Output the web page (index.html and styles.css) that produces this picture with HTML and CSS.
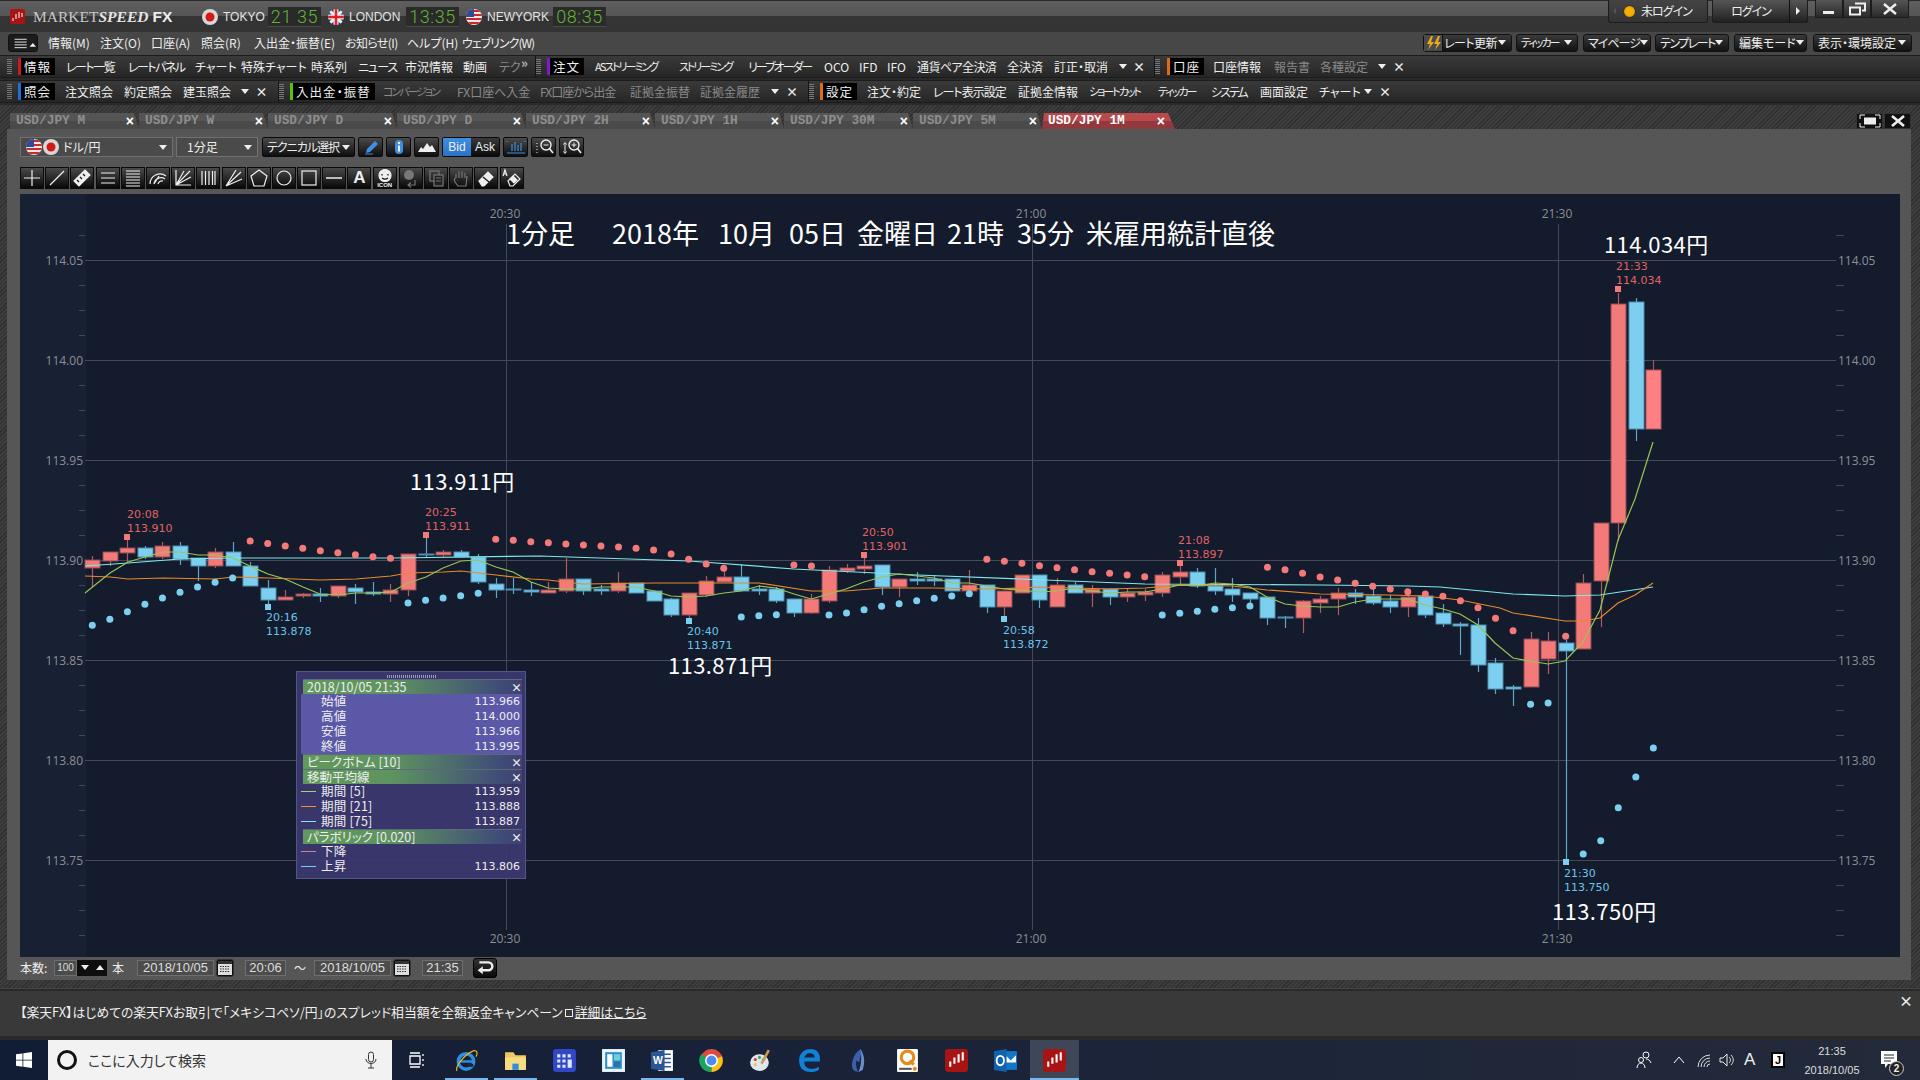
FILE: index.html
```html
<!DOCTYPE html>
<html lang="ja">
<head>
<meta charset="utf-8">
<title>MARKETSPEED FX</title>
<link rel="stylesheet" href="styles.css">
</head>
<body>
<svg class="defs" width="0" height="0" aria-hidden="true">
  <defs>
    <clipPath id="cf"><circle cx="8" cy="8" r="8"/></clipPath>
    <symbol id="jp" viewBox="0 0 16 16"><circle cx="8" cy="8" r="8" fill="#d8d8d8"/><circle cx="8" cy="8" r="4.5" fill="#d41818"/></symbol>
    <symbol id="uk" viewBox="0 0 16 16"><g clip-path="url(#cf)"><rect width="16" height="16" fill="#2a3f8f"/><path d="M0 0L16 16M16 0L0 16" stroke="#eee" stroke-width="3"/><path d="M8 0v16M0 8h16" stroke="#eee" stroke-width="5"/><path d="M8 0v16M0 8h16" stroke="#d22" stroke-width="2.5"/></g></symbol>
    <symbol id="us" viewBox="0 0 16 16"><g clip-path="url(#cf)"><rect width="16" height="16" fill="#e8e8e8"/><path d="M0 2h16M0 6h16M0 10h16M0 14h16" stroke="#c92a2a" stroke-width="2"/><rect width="8" height="8" fill="#2e4a9a"/></g></symbol>
  </defs>
</svg>
<div class="app">
  <header class="titlebar">
    <svg class="logo" viewBox="0 0 15 15"><rect width="15" height="15" rx="2" fill="#a81414"/><path d="M3 9v3M6 5v5M9 3v6M12 4v4" stroke="#f2d8d8" stroke-width="1.2"/></svg>
    <div class="brand"><span>MARKET</span><b>SPEED</b><strong>FX</strong></div>
    <svg class="flag fl1"><use href="#jp"/></svg><span class="city c1">TOKYO</span><span class="clock">21 35</span>
    <svg class="flag fl2"><use href="#uk"/></svg><span class="city c2">LONDON</span><span class="clock">13:35</span>
    <svg class="flag fl2"><use href="#us"/></svg><span class="city c3">NEWYORK</span><span class="clock">08:35</span>
    <div class="top-right">
      <div class="status-box"><i class="arrow-l"></i><i class="led"></i><span class="l1">未ログイン</span></div>
      <div class="login"><span class="l1">ログイン</span><i class="arrow-r"></i></div>
      <div class="winbtns">
        <span class="wb"><svg viewBox="0 0 20 14"><rect x="4" y="9" width="11" height="3" fill="#eee"/></svg></span>
        <span class="wb"><svg viewBox="0 0 20 14"><path d="M8 1.5h10v7h-3M3 5.5h10v7H3z" fill="none" stroke="#eee" stroke-width="2"/></svg></span>
        <span class="wb wb-x"><svg viewBox="0 0 20 14"><path d="M4 2l12 10M16 2L4 12" stroke="#eee" stroke-width="2.4"/></svg></span>
      </div>
    </div>
  </header>

  <nav class="menubar">
    <div class="menu-list">
      <span class="hamb"><svg viewBox="0 0 30 16"><path d="M6 4h13M6 7h13M6 10h13M6 13h13" stroke="#eee"/><path d="M22 12l3.500-4 3.500 4z" fill="#eee"/></svg></span>
      <span>情報(M)</span><span>注文(O)</span><span>口座(A)</span><span>照会(R)</span><span>入出金・振替(E)</span><span class="l05">お知らせ(I)</span><span>ヘルプ(H)</span><span class="l1">ウェブリンク(W)</span>
    </div>
    <div class="quick">
      <span class="qb q1"><span class="bolt"><svg viewBox="0 0 18 16"><path d="M7 1L3 9h3l-2 6 6-8H7l2-6zM14 1l-4 8h3l-2 6 6-8h-3l2-6z" fill="#e8a81c"/></svg></span><span class="qt l05">レート更新</span><i class="dn"></i></span>
      <span class="qb q2"><span class="qt l3">ティッカー</span><i class="dn"></i></span>
      <span class="qb q3"><span class="qt l1">マイページ</span><i class="dn"></i></span>
      <span class="qb q4"><span class="qt l15">テンプレート</span><i class="dn"></i></span>
      <span class="qb q5"><span class="qt">編集モード</span><i class="dn"></i></span>
      <span class="qb q6"><span class="qt">表示・環境設定</span><i class="dn"></i></span>
    </div>
  </nav>

  <div class="toolrow">
    <div class="tg ta1"><i class="grip"></i><span class="lbl l-red">情報</span><span class="l15">レート一覧</span><span class="l15">レートパネル</span><span>チャート</span><span>特殊チャート</span><span>時系列</span><span class="l1">ニュース</span><span>市況情報</span><span>動画</span><span class="mut">テク</span><span class="more">»</span></div>
    <div class="tg ta2"><i class="grip"></i><span class="lbl l-pur">注文</span><span class="l3">ASストリーミング</span><span class="l3">ストリーミング</span><span class="l2">リーブオーダー</span><span>OCO</span><span>IFD</span><span>IFO</span><span class="l05">通貨ペア全決済</span><span>全決済</span><span>訂正・取消</span><i class="dn"></i><span class="x">×</span></div>
    <div class="tg ta3"><i class="grip"></i><span class="lbl l-org">口座</span><span>口座情報</span><span class="mut">報告書</span><span class="mut">各種設定</span><i class="dn"></i><span class="x">×</span></div>
  </div>
  <div class="toolrow">
    <div class="tg tb1"><i class="grip"></i><span class="lbl l-blu">照会</span><span>注文照会</span><span>約定照会</span><span>建玉照会</span><i class="dn"></i><span class="x">×</span></div>
    <div class="tg tb2"><i class="grip"></i><span class="lbl l-grn">入出金・振替</span><span class="mut l3">コンバージョン</span><span class="mut">FX口座へ入金</span><span class="mut l1">FX口座から出金</span><span class="mut">証拠金振替</span><span class="mut">証拠金履歴</span><i class="dn"></i><span class="x">×</span></div>
    <div class="tg tb3"><i class="grip"></i><span class="lbl l-org">設定</span><span>注文・約定</span><span class="l1">レート表示設定</span><span>証拠金情報</span><span class="l3">ショートカット</span><span class="l3">ティッカー</span><span class="l2">システム</span><span>画面設定</span><span>チャート</span><i class="dn"></i><span class="x">×</span></div>
  </div>

  <main class="workspace">
    <div class="tabs">
      <div class="tab"><span>USD/JPY M</span><em>×</em></div>
      <div class="tab"><span>USD/JPY W</span><em>×</em></div>
      <div class="tab"><span>USD/JPY D</span><em>×</em></div>
      <div class="tab"><span>USD/JPY D</span><em>×</em></div>
      <div class="tab"><span>USD/JPY 2H</span><em>×</em></div>
      <div class="tab"><span>USD/JPY 1H</span><em>×</em></div>
      <div class="tab"><span>USD/JPY 30M</span><em>×</em></div>
      <div class="tab"><span>USD/JPY 5M</span><em>×</em></div>
      <div class="tab tab-on"><span>USD/JPY 1M</span><em>×</em></div>
      <div class="tab-tools">
        <span class="tt"><svg viewBox="0 0 24 14"><rect x="6" y="3.500" width="12" height="7" fill="#eee"/><path d="M2 5V1h5M17 1h5v4M22 9v4h-5M7 13H2V9" fill="none" stroke="#eee"/></svg></span>
        <span class="tt"><svg viewBox="0 0 24 14"><path d="M6 2l12 10M18 2L6 12" stroke="#eee" stroke-width="2.600"/></svg></span>
      </div>
    </div>
    <section class="panel">
      <div class="chart-tools">
        <div class="select s-pair"><svg class="flag"><use href="#us"/></svg><svg class="flag"><use href="#jp"/></svg><span>ドル/円</span><i class="dn"></i></div>
        <div class="select s-per"><span>1分足</span><i class="dn"></i></div>
        <div class="btn b-tech"><span class="l1">テクニカル選択</span><i class="dn"></i></div>
        <div class="btn b-ic"><svg viewBox="0 0 20 18"><path d="M5 15l1-4 8-8 3 3-8 8z" fill="#3f8fe0"/><path d="M4 16h8" stroke="#3f8fe0"/></svg></div>
        <div class="btn b-ic"><svg viewBox="0 0 20 18"><rect x="6" y="2" width="8" height="14" rx="4" fill="#3f8fe0"/><rect x="9" y="4" width="2" height="2" fill="#eee"/><rect x="9" y="7.500" width="2" height="6" fill="#eee"/></svg></div>
        <div class="btn b-ic"><svg viewBox="0 0 20 18"><path d="M1 14l3-5 2 2 4-6 3 4 2-2 4 7z" fill="#eee"/></svg></div>
        <div class="seg"><span class="seg-on">Bid</span><span>Ask</span></div>
        <div class="btn b-ic"><svg viewBox="0 0 20 18"><path d="M1 3v1M19 3v1M1 15h18M6 6v7M9 4v9M12 7v6M15 5v8" stroke="#3f8fe0" stroke-width="1.200"/></svg></div>
        <div class="btn b-ic"><svg viewBox="0 0 20 18"><circle cx="12" cy="7" r="5" fill="none" stroke="#eee" stroke-width="1.400"/><path d="M9.500 7h5M3 5v1M3 8v1M3 11v1M3 14v1" stroke="#eee"/><path d="M15.500 10.500L19 15" stroke="#eee" stroke-width="1.600"/></svg></div>
        <div class="btn b-ic"><svg viewBox="0 0 20 18"><circle cx="12" cy="7" r="5" fill="none" stroke="#eee" stroke-width="1.400"/><path d="M9.500 7h5M12 4.500v5M3 5v10M1.500 6.500L3 4.500l1.500 2M1.500 13.500L3 15.500l1.500-2" stroke="#eee"/><path d="M15.500 10.500L19 15" stroke="#eee" stroke-width="1.600"/></svg></div>
      </div>
      <div class="draw-tools">
        <span class="dt"><svg viewBox="0 0 20 20"><path d="M10 2v16M2 10h16"/></svg></span>
        <span class="dt"><svg viewBox="0 0 20 20"><path d="M3 17L17 3"/></svg></span>
        <span class="dt"><svg viewBox="0 0 20 20"><path class="fw" d="M2 13L13 2l5 5L7 18z"/><path class="k" d="M5 12l2 2M8 9l2 2M11 6l2 2"/></svg></span>
        <span class="dt"><svg viewBox="0 0 20 20"><path d="M3 5h14M3 10h14M3 15h14"/></svg></span>
        <span class="dt"><svg viewBox="0 0 20 20"><path d="M3 3h14M3 6h14M3 9h14M3 12h14M3 15h14M3 18h14"/></svg></span>
        <span class="dt"><svg viewBox="0 0 20 20"><path d="M2 16A10 10 0 0 1 18 8M6 16A7 7 0 0 1 17 11M10 16A4 4 0 0 1 15 13M11 8L6 16"/></svg></span>
        <span class="dt"><svg viewBox="0 0 20 20"><path d="M3 2v15h15M3 17L17 3M3 17L11 3M3 17L18 9"/></svg></span>
        <span class="dt"><svg viewBox="0 0 20 20"><path d="M4 3v14M7.500 3v14M11 3v14M14.500 3v14M17 3v14"/></svg></span>
        <span class="dt"><svg viewBox="0 0 20 20"><path d="M2 18L12 2M2 18L17 4M2 18L18 11"/></svg></span>
        <span class="dt"><svg viewBox="0 0 20 20"><path d="M10 2l8 6-3 10H5L2 8z"/></svg></span>
        <span class="dt"><svg viewBox="0 0 20 20"><circle cx="10" cy="10" r="7"/></svg></span>
        <span class="dt"><svg viewBox="0 0 20 20"><rect x="3" y="3" width="14" height="14"/></svg></span>
        <span class="dt"><svg viewBox="0 0 20 20"><path d="M2 10h16" stroke-width="1.500"/></svg></span>
        <span class="dt dt-a">A</span>
        <span class="dt dt-icon"><svg viewBox="0 0 20 13"><circle class="fw" cx="10" cy="6.500" r="6"/><path class="k" d="M7 5v1.500M13 5v1.500M7 9c2 1.500 4 1.500 6 0"/></svg><small>ICON</small></span>
        <span class="dt dis dis-1"><svg viewBox="0 0 20 20"><circle class="fg" cx="8" cy="7" r="5"/><path d="M14 12v5H7M10 14.500L7 17l3 2.500"/></svg></span>
        <span class="dt dis"><svg viewBox="0 0 20 20"><rect x="4" y="3" width="9" height="10"/><rect class="fd" x="8" y="7" width="9" height="11"/><path d="M10 10h5M10 13h5"/></svg></span>
        <span class="dt dis"><svg viewBox="0 0 20 20"><path d="M5 10V6M8 10V3.500M11 10V3.500M14 10V5M5 10c-2 0-2 2-1 4l3 4h8l1-10"/></svg></span>
        <span class="dt"><svg viewBox="0 0 20 20"><path class="fw" d="M3 13L12 4l5 5-9 9H6z"/><path class="k" d="M7 9l6 5"/></svg></span>
        <span class="dt"><svg viewBox="0 0 20 20"><path d="M6 13L13 6l5 5-7 7H8z"/><path class="fw" d="M8 11l3-3 4 4-3 3z"/><path d="M1 8l2-6 2 6M2 6h2"/></svg></span>
      </div>
      <div class="chart-area">
        <svg id="chart" class="chart" viewBox="20 194 1880 763" role="img" aria-label="USD/JPY 1分足"></svg>
        <aside class="legend">
          <div class="lg-grip"></div>
          <div class="lg-head"><span>2018/10/05 21:35</span><em>×</em></div>
          <div class="lg-body">
            <div class="lg-row"><span>始値</span><b>113.966</b></div>
            <div class="lg-row"><span>高値</span><b>114.000</b></div>
            <div class="lg-row"><span>安値</span><b>113.966</b></div>
            <div class="lg-row"><span>終値</span><b>113.995</b></div>
          </div>
          <div class="lg-head"><span>ピークボトム [10]</span><em>×</em></div>
          <div class="lg-head"><span>移動平均線</span><em>×</em></div>
          <div class="lg-row"><i class="sw sw-g"></i><span>期間 [5]</span><b>113.959</b></div>
          <div class="lg-row"><i class="sw sw-o"></i><span>期間 [21]</span><b>113.888</b></div>
          <div class="lg-row"><i class="sw sw-c"></i><span>期間 [75]</span><b>113.887</b></div>
          <div class="lg-head"><span>パラボリック [0.020]</span><em>×</em></div>
          <div class="lg-row"><i class="sw sw-r"></i><span>下降</span><b></b></div>
          <div class="lg-row"><i class="sw sw-b"></i><span>上昇</span><b>113.806</b></div>
        </aside>
      </div>
      <div class="statusrow">
        <span class="st-l">本数:</span>
        <span class="fld f-n">100</span>
        <span class="spin"><i class="dn"></i></span><span class="spin"><i class="up"></i></span>
        <span class="st-u">本</span>
        <span class="fld f-d">2018/10/05</span>
        <span class="cal"><svg viewBox="0 0 16 16"><rect x="1" y="1" width="14" height="14" fill="#ddd"/><rect x="1" y="1" width="14" height="3" fill="#333"/><path d="M3 6.500h10M3 9h10M3 11.500h10" stroke="#333" stroke-dasharray="1.500 1"/></svg></span>
        <span class="fld f-t">20:06</span>
        <span class="st-w">～</span>
        <span class="fld f-d">2018/10/05</span>
        <span class="cal"><svg viewBox="0 0 16 16"><rect x="1" y="1" width="14" height="14" fill="#ddd"/><rect x="1" y="1" width="14" height="3" fill="#333"/><path d="M3 6.500h10M3 9h10M3 11.500h10" stroke="#333" stroke-dasharray="1.500 1"/></svg></span>
        <span class="fld f-t">21:35</span>
        <span class="ret"><svg viewBox="0 0 18 16"><path d="M4 3h8a3 3 0 0 1 0 7H5" fill="none" stroke="#eee" stroke-width="2.200"/><path d="M7 6.500L2.500 10 7 13.500z" fill="#eee"/></svg></span>
      </div>
    </section>
  </main>

  <footer class="ticker">
    <p>【楽天FX】はじめての楽天FXお取引で「メキシコペソ/円」のスプレッド相当額を全額返金キャンペーン<i class="box"></i><u>詳細はこちら</u></p>
    <span class="tick-x">×</span>
  </footer>

  <div class="taskbar">
    <span class="start"><svg viewBox="0 0 16 16"><path d="M0 2.300l6.500-.9v6.300H0zM7.300 1.300L16 0v7.700H7.300zM0 8.400h6.500v6.300L0 13.800zM7.300 8.400H16V16l-8.700-1.200z" fill="#fff"/></svg></span>
    <div class="search"><i class="ring"></i><span>ここに入力して検索</span><svg class="mic" viewBox="0 0 12 18"><rect x="3.500" y="1" width="5" height="10" rx="2.500" fill="none" stroke="#333"/><path d="M1 8c0 6 10 6 10 0M6 13v4M3 17h6" fill="none" stroke="#333"/></svg></div>
    <span class="tview"><svg viewBox="0 0 18 18"><path d="M2 5h10v8H2zM2 2h10M2 16h10M15 3v2M15 8v2M15 13v2" fill="none" stroke="#fff" stroke-width="1.300"/></svg></span>
    <div class="apps">
      <span class="app-i run"><svg viewBox="0 0 26 26"><circle cx="12.500" cy="14" r="8" fill="none" stroke="#2e8fe0" stroke-width="3.600"/><path d="M5 14h15" stroke="#2e8fe0" stroke-width="2.600"/><path d="M20 18h-6" stroke="#1c2434" stroke-width="3"/><path d="M3 24C1 20 10 7 20 3c4-1 5 2 3 6" fill="none" stroke="#e8b020" stroke-width="1.300"/></svg></span>
      <span class="app-i run"><svg viewBox="0 0 24 24"><path d="M2 4h8l2 3h10v14H2z" fill="#f0c860"/><path d="M2 9h20v12H2z" fill="#f8dc80"/><path d="M9 21v-6h6v6z" fill="#2f8fd8"/></svg></span>
      <span class="app-i"><svg viewBox="0 0 24 24"><rect x="1" y="1" width="22" height="22" rx="3" fill="#3048c8"/><path d="M5 6h3v3H5zM10 6h3v3h-3zM15 6h3v3h-3zM5 11h3v3H5zM10 11h3v3h-3zM15 11h4v8h-4zM5 16h3v3H5zM10 16h3v3h-3z" fill="#dfe6ff"/></svg></span>
      <span class="app-i"><svg viewBox="0 0 24 24"><rect x="1" y="1" width="22" height="22" fill="#e8f4fb"/><rect x="4" y="4" width="16" height="16" fill="#2f8fc8"/><rect x="6" y="6" width="5" height="12" fill="#fff"/><rect x="12.500" y="6" width="6" height="6" fill="#6fd0d8"/><rect x="12.500" y="13" width="6" height="5" fill="#2f6fa8"/></svg></span>
      <span class="app-i run"><svg viewBox="0 0 24 24"><path d="M8 2h14v20H8z" fill="#fff"/><path d="M12 6h8M12 10h8M12 14h8M12 18h8" stroke="#2b5797" stroke-width="1.500"/><path d="M1 4l13-2v20L1 20z" fill="#2b5797"/><text x="7.500" y="15.500" text-anchor="middle" class="wd">W</text></svg></span>
      <span class="app-i"><svg viewBox="0 0 24 24"><circle cx="12" cy="12" r="11" fill="#dd4b3e"/><path d="M12 12L22 8A11 11 0 0 1 12 23z" fill="#f6c414"/><path d="M12 12L12 23A11 11 0 0 1 2 6z" fill="#1da462"/><circle cx="12" cy="12" r="5.500" fill="#4c8bf5" stroke="#fff" stroke-width="1.500"/></svg></span>
      <span class="app-i"><svg viewBox="0 0 24 24"><ellipse cx="11" cy="14" rx="9" ry="8" fill="#dfe6ee"/><circle cx="7" cy="11" r="1.500" fill="#d33"/><circle cx="11" cy="9" r="1.500" fill="#3a6"/><circle cx="15" cy="11" r="1.500" fill="#36c"/><circle cx="7" cy="16" r="1.500" fill="#ec3"/><path d="M20 2L13 15" stroke="#c89a50" stroke-width="2.500"/></svg></span>
      <span class="app-i"><svg viewBox="0 0 24 24"><path d="M22 13H7c0 4 2 7 7 7 3 0 5-1 7-2v3c-2 1-5 2-8 2C6 23 2 19 2 12 2 5 7 1 13 1s9 4 9 9zM7 9h10c0-3-2-4-5-4S8 7 7 9z" fill="#1080d8"/></svg></span>
      <span class="app-i"><svg viewBox="0 0 24 24"><path d="M14 1c-6 4-9 11-8 18 1 3 4 4 6 4-2-3-3-7-2-11l3 2c0-5 3-9 1-13z" fill="#3a60a8"/><path d="M14 1c3 5 5 11 2 20l-4 2c3-7 3-14 2-22z" fill="#6a8fc8"/></svg></span>
      <span class="app-i"><svg viewBox="0 0 24 24"><rect x="2" y="1" width="20" height="22" rx="1" fill="#fff"/><circle cx="12" cy="9" r="6" fill="none" stroke="#e88a18" stroke-width="3"/><path d="M14 12l4 4" stroke="#e88a18" stroke-width="3"/><path d="M4 20h12" stroke="#555" stroke-width="2"/><circle cx="19" cy="20" r="2" fill="#e88a18"/></svg></span>
      <span class="app-i"><svg viewBox="0 0 24 24"><rect x="1" y="1" width="22" height="22" rx="3" fill="#a81414"/><path d="M6 13v5M10 9v6M14 6v8M18 4v8" stroke="#fff" stroke-width="2"/></svg></span>
      <span class="app-i"><svg viewBox="0 0 24 24"><path d="M10 3h13v18H10z" fill="#1476c8"/><path d="M12 7l5 5 5-5v7H12z" fill="#fff"/><path d="M1 3l12-2v22L1 21z" fill="#0f63ad"/><ellipse cx="7" cy="12" rx="3.500" ry="4.500" fill="none" stroke="#fff" stroke-width="1.800"/></svg></span>
      <span class="app-i active"><svg viewBox="0 0 24 24"><rect x="1" y="1" width="22" height="22" rx="3" fill="#a81414"/><path d="M6 13v5M10 9v6M14 6v8M18 4v8" stroke="#fff" stroke-width="2"/></svg></span>
    </div>
    <div class="tray">
      <svg class="t-ic ppl" viewBox="0 0 18 20"><circle cx="11" cy="5" r="3" fill="none" stroke="#fff"/><circle cx="6" cy="10" r="2.500" fill="none" stroke="#fff"/><path d="M2 18c0-3 2-5 4-5s4 2 4 5M11 9c2 0 4 1 5 4" fill="none" stroke="#fff"/></svg>
      <svg class="t-ic caret" viewBox="0 0 14 10"><path d="M2 8l5-6 5 6" fill="none" stroke="#fff"/></svg>
      <svg class="t-ic wifi" viewBox="0 0 16 18"><path d="M2 16a12 12 0 0 1 12-12M5 16a9 9 0 0 1 9-9M8 16a6 6 0 0 1 6-6M11 16a3 3 0 0 1 3-3" fill="none" stroke="#ddd"/></svg>
      <svg class="t-ic spk" viewBox="0 0 16 18"><path d="M1 7h3l4-4v12l-4-4H1z" fill="none" stroke="#eee"/><path d="M10 6c2 2 2 4 0 6M12 4c3 3 3 7 0 10" fill="none" stroke="#ddd"/></svg>
      <span class="t-a">A</span>
      <span class="t-j">J</span>
      <div class="t-clock"><span>21:35</span><span>2018/10/05</span></div>
      <span class="t-note"><svg viewBox="0 0 18 20"><path d="M1 1h16v13H8l-3 4v-4H1z" fill="#fff"/><path d="M4 5h10M4 8h10M4 11h7" stroke="#1c2434"/></svg><em>2</em></span>
    </div>
  </div>
</div>
<script src="chart.js"></script>
</body>
</html>
```
FILE: styles.css
```css
* { box-sizing: border-box; }
html, body { margin: 0; padding: 0; background: #222; }
body { font-family: "Noto Sans CJK JP", "Liberation Sans", sans-serif; font-feature-settings: "palt"; color: #eee; font-size: 12px; line-height: 1; }
.defs { position: absolute; }
i, em { font-style: normal; }
.app { width: 1920px; height: 1080px; display: flex; flex-direction: column; overflow: hidden; background: #2a2a2a; }
.l05 { letter-spacing: -.6px; }
.l1 { letter-spacing: -1px; }
.l15 { letter-spacing: -1.500px; }
.l2 { letter-spacing: -2px; }
.l3 { font-size: 11px; letter-spacing: -2px; }

/* title bar */
.titlebar { height: 32px; display: flex; align-items: center; padding-left: 10px; border-top: 1px solid #2a2a2a;
  background: linear-gradient(#5f5f5f 0, #555 48%, #353535 49%, #333 100%); }
.logo { width: 15px; height: 15px; }
.brand { margin-left: 8px; width: 160px; font-family: "Liberation Serif", serif; font-size: 15.500px; color: #c8c8c8; display: flex; align-items: baseline; }
.brand b { font-style: italic; color: #e4e4e4; }
.brand strong { margin-left: 4px; font-family: "Liberation Sans", sans-serif; color: #eee; }
.flag { width: 16px; height: 16px; flex: none; }
.fl1 { margin-left: 9px; }
.fl2 { margin-left: 7px; }
.city { font-family: "Liberation Sans", sans-serif; font-size: 12px; color: #e4e4e4; margin-left: 5px; }
.c1 { width: 45px; } .c2 { width: 57px; } .c3 { width: 66px; }
.clock { width: 53px; height: 20px; background: #2a2a2a; border-bottom: 1px solid #4a4a4a; color: #62b534; font-family: Roboto, sans-serif; font-weight: 300; font-size: 18px; line-height: 20px; text-align: center; letter-spacing: .6px; }
.top-right { margin-left: auto; margin-right: 11px; display: flex; align-self: flex-start; margin-top: -1px; }
.status-box { width: 100px; height: 23px; margin-right: 4px; display: flex; align-items: center; background: linear-gradient(#444, #333); border: 1px solid #1c1c1c; border-top: 0; border-radius: 0 0 3px 3px; }
.arrow-l { border: 3px solid transparent; border-right-color: #555; margin: 0 7px 0 1px; }
.led { width: 13px; height: 13px; border-radius: 50%; background: radial-gradient(#f5b000 50%, #a06a00); border: 1px solid #333; margin: 0 5px 0 0; }
.login { width: 96px; height: 23px; display: flex; align-items: center; background: linear-gradient(#555, #222); border: 1px solid #1c1c1c; border-top: 0; border-radius: 0 0 3px 3px; }
.login span { flex: 1; text-align: center; border-right: 1px solid #111; line-height: 22px; }
.arrow-r { border: 4px solid transparent; border-left-color: #eee; margin: 0 3px 0 6px; }
.winbtns { display: flex; margin-left: 7px; }
.wb { width: 28px; height: 18px; background: linear-gradient(#555, #2a2a2a); border: 1px solid #1c1c1c; border-top: 0; display: flex; align-items: center; justify-content: center; }
.wb svg { width: 20px; height: 14px; }
.wb-x { width: 38px; }

/* menu */
.menubar { height: 23px; display: flex; align-items: center; background: #474747; padding: 0 0 2px 8px; }
.menu-list { display: grid; grid-template-columns: 40px 52px 51px 50px 53px 91px 62px 55px auto; align-items: center; justify-items: start; }
.hamb { width: 30px; height: 18px; background: #1c1c1c; border: 1px solid #111; border-radius: 3px; display: block; }
.hamb svg { width: 28px; height: 16px; display: block; }
.quick { margin-left: auto; display: flex; align-items: center; }
.qb { height: 18px; display: flex; align-items: center; justify-content: space-between; background: linear-gradient(#3a3a3a, #111); border: 1px solid #111; border-radius: 3px; padding: 0 5px 0 4px; }
.qt { white-space: nowrap; }
.q1 { width: 89px; padding-left: 0; }
.q2 { width: 62px; margin-left: 4px; }
.q3 { width: 68px; margin-left: 5px; }
.q4 { width: 74px; margin-left: 4px; }
.q5 { width: 73px; margin-left: 5px; }
.q6 { width: 99px; margin-left: 6px; margin-right: 8px; }
.bolt { width: 19px; height: 16px; border-right: 1px solid #111; background: #4a4a4a; display: block; }
.bolt svg { width: 18px; height: 16px; display: block; }
.dn { display: inline-block; width: 0; height: 0; border: 4px solid transparent; border-top: 5px solid #eee; border-bottom: 0; flex: none; }
.up { display: inline-block; width: 0; height: 0; border: 4px solid transparent; border-bottom: 5px solid #eee; border-top: 0; }

/* toolbars */
.toolrow { height: 23px; margin-bottom: 2px; display: flex; padding-left: 7px; background: linear-gradient(#3a3a3a, #262626); border-top: 1px solid #1c1c1c; border-bottom: 1px solid #1c1c1c; align-items: center; }
.tg { display: grid; align-items: center; justify-items: start; height: 100%; white-space: nowrap; padding-right: 8px; }
.tg + .tg { box-shadow: -1px 0 #141414; }
.ta1 { grid-template-columns: 11px 48px 62px 67px 46px 70px 47px 47px 58px 36px 22px 7px; }
.ta2 { grid-template-columns: 11px 48px 84px 69px 76px 35px 28px 30px 90px 47px 61px 16px 16px; }
.ta3 { grid-template-columns: 12px 46px 61px 46px 54px 16px 18px; }
.tb1 { grid-template-columns: 11px 47px 59px 59px 54px 16px 17px; padding-right: 9px; }
.tb2 { grid-template-columns: 11px 93px 74px 83px 90px 70px 67px 16px 18px; }
.tb3 { grid-template-columns: 11px 47px 66px 85px 71px 69px 53px 49px 59px 41px 16px 18px; }
.tg > .dn, .tg > .x { justify-self: center; }
.x { font-weight: 700; font-size: 12px; }
.mut { color: #8a8a8a; }
.more { color: #bbb; font-size: 13px; align-self: start; font-weight: 700; }
.grip { width: 5px; height: 15px; background: repeating-linear-gradient(#777 0 1px, transparent 1px 2px); }
.lbl { height: 17px; line-height: 17px; padding: 0 4px 0 3px; background: #000; border-left: 3px solid #fff; letter-spacing: 1px; font-size: 12.500px; }
.l-red { border-left-color: #d01818; } .l-pur { border-left-color: #8018d0; } .l-org { border-left-color: #e06a10; } .l-blu { border-left-color: #1a72d8; } .l-grn { border-left-color: #58c010; }

/* workspace */
.workspace { height: 883px; padding: 8px 9px 8px 7px; background: repeating-linear-gradient(135deg, #2f2f2f 0 1px, #3d3d3d 1px 3px); display: flex; flex-direction: column; }
.tabs { height: 16px; display: flex; padding-left: 3px; flex: none; }
.tab { width: 129px; height: 16px; display: flex; align-items: center; justify-content: space-between; padding: 0 3px 0 6px;
  background: linear-gradient(#555 0 50%, #4a4a4a 50%); clip-path: polygon(0 0, 124px 0, 100% 100%, 0 100%); font-family: "Liberation Mono", monospace; font-weight: 700; font-size: 12.800px; color: #8e8e8e; }
.tab em { color: #fff; font-family: "Liberation Sans", sans-serif; font-size: 14px; font-weight: 700; margin-right: 2px; }
.tab-on { width: 133px; background: linear-gradient(#b84a4e 0 50%, #92393e 50%); color: #fff; clip-path: polygon(2px 0, 126px 0, 100% 100%, 0 100%); }
.tab-on em { margin-right: 7px; }
.tab-tools { margin-left: auto; display: flex; }
.tt { width: 27px; height: 16px; background: #111; border: 1px solid #333; margin-left: 1px; display: flex; align-items: center; justify-content: center; }
.tt svg { width: 24px; height: 14px; }
.panel { flex: 1; background: #565656; padding: 8px 11px 0 13px; display: flex; flex-direction: column; min-height: 0; }
.chart-tools { height: 20px; display: flex; align-items: stretch; flex: none; }
.select { display: flex; align-items: center; background: #4a4a4a; border: 1px solid #707070; padding: 0 5px; margin-right: 3px; }
.s-pair { width: 153px; }
.s-pair .flag + .flag { margin-left: 1px; }
.s-pair span { margin-left: 4px; flex: 1; }
.s-per { width: 82px; justify-content: space-between; padding-left: 10px; margin-right: 4px; }
.btn { background: linear-gradient(#4a4a4a, #0e0e0e); border: 1px solid #0a0a0a; border-radius: 2px; display: flex; align-items: center; justify-content: center; }
.b-tech { width: 93px; margin-right: 3px; gap: 3px; white-space: nowrap; padding: 0 3px; }
.b-ic { width: 25px; margin-right: 3px; }
.b-ic svg { width: 20px; height: 18px; }
.seg { width: 58px; margin-right: 3px; display: flex; border: 1px solid #0a0a0a; border-radius: 2px; font-family: "Liberation Sans", sans-serif; }
.seg span { flex: 1; display: flex; align-items: center; justify-content: center; background: linear-gradient(#3a3a3a, #0a0a0a); }
.seg .seg-on { background: linear-gradient(#3f8fe0, #2a72c8); }
.draw-tools { height: 22px; margin-top: 10px; display: flex; gap: 1.200px; flex: none; }
.dt { width: 24px; height: 22px; background: linear-gradient(#4a4a4a, #080808); border: 1px solid #0a0a0a; display: flex; align-items: center; justify-content: center; flex-direction: column; }
.dt svg { width: 20px; height: 20px; fill: none; stroke: #eee; stroke-width: 1.200; }
.dt .fw { fill: #eee; }
.dt .fd { fill: #222; }
.dt .fg { fill: #777; stroke: none; }
.dt .k { stroke: #111; }
.dis svg { stroke: #777; }
.dis-1 { margin-left: 1px; }
.dt-a { font: 700 17px "Liberation Sans", sans-serif; }
.dt-icon svg { height: 13px; }
.dt-icon small { font: 700 6px "Liberation Sans", sans-serif; }

/* chart */
.chart-area { position: relative; height: 763px; flex: none; margin-top: 5px; }
.chart { display: block; width: 1880px; height: 763px; background: #131b2c; }
.legend { position: absolute; left: 276px; top: 477px; width: 230px; height: 208px; background: rgba(60, 56, 112, .94); border: 1px solid #55558a; padding: 3px 3px 0 4px; font-size: 12.500px; }
.lg-grip { width: 50px; height: 3px; margin: 0 auto 1px; background: repeating-linear-gradient(90deg, #9a9ab8 0 1px, transparent 1px 2px); }
.lg-head { height: 15px; margin-left: 2px; display: flex; align-items: center; justify-content: space-between; padding: 0 0 0 4px; background: linear-gradient(90deg, #61995c 0, #5e9460 40%, #3f4c78 90%, #3f4270); border-top: 1px solid #5a6a78; }
.lg-head em { font-weight: 700; font-size: 11px; }
.lg-body { background: #5b58a8; }
.lg-row { height: 15px; display: flex; align-items: center; justify-content: space-between; padding: 0 2px 0 20px; position: relative; letter-spacing: .2px; }
.lg-row b { font-weight: 400; font-family: "DejaVu Sans", sans-serif; font-size: 11px; letter-spacing: 0; }
.lg-row span { flex: 1; }
.sw { position: absolute; left: 0; top: 7px; width: 15px; height: 1px; }
.sw-g { background: #a0d070; } .sw-o { background: #f09030; } .sw-c { background: #80e8f0; } .sw-r { background: #d08090; } .sw-b { background: #70d0f0; }

/* status */
.statusrow { height: 23px; display: flex; align-items: center; flex: none; padding-bottom: 2px; }
.st-l { width: 34px; }
.fld { height: 16px; background: #4c4c4c; border: 1px solid #6e6e6e; display: flex; align-items: center; font-family: "Liberation Sans", sans-serif; color: #ddd; justify-content: center; }
.f-n { width: 23px; font-size: 10px; }
.spin { width: 15px; height: 16px; background: #0e0e0e; display: flex; align-items: center; justify-content: center; }
.st-u { margin: 0 12px 0 5px; width: 13px; }
.f-d { width: 77px; font-size: 13px; }
.cal { width: 18px; height: 18px; margin: 0 11px 0 2px; background: #0e0e0e; border-radius: 3px; border: 1px solid #333; }
.cal svg { width: 16px; height: 16px; display: block; }
.f-t { width: 41px; font-size: 13px; }
.st-w { width: 28px; text-align: center; }
.ret { margin-left: 10px; width: 24px; height: 20px; background: linear-gradient(#333, #0a0a0a); border: 1px solid #000; border-radius: 3px; }
.ret svg { width: 22px; height: 18px; display: block; }

/* ticker */
.ticker { height: 52px; padding: 2px 0 5px; background: #2a2a2a; border-top: 1px solid #444; display: block; position: relative; }
.ticker p { margin: 0; height: 45px; background: #393939; padding: 0 0 0 20px; line-height: 42px; font-size: 12.800px; white-space: nowrap; }
.box { display: inline-block; width: 8px; height: 8px; border: 1px solid #eee; margin: 0 2px; }
.tick-x { position: absolute; right: 7px; top: 4px; font-weight: 700; font-size: 14px; }

/* taskbar */
.taskbar { height: 40px; flex: none; display: flex; align-items: center; background: linear-gradient(90deg, #111c35, #1a2338 50%, #232a3a); position: relative; }
.start { width: 48px; height: 40px; display: flex; align-items: center; justify-content: center; }
.start svg { width: 16px; height: 16px; }
.search { width: 344px; height: 40px; background: #f2f2f2; display: flex; align-items: center; color: #333; font-size: 14px; padding-left: 9px; }
.ring { width: 20px; height: 20px; border: 3px solid #111; border-radius: 50%; margin-right: 11px; flex: none; }
.search span { flex: 1; }
.mic { width: 12px; height: 18px; margin-right: 15px; }
.tview { width: 49px; height: 40px; display: flex; align-items: center; justify-content: center; }
.tview svg { width: 18px; height: 18px; }
.apps { display: flex; margin-left: 1px; }
.app-i { width: 49px; height: 40px; display: flex; align-items: center; justify-content: center; position: relative; }
.app-i svg { width: 25px; height: 25px; }
.run::after, .active::after { content: ""; position: absolute; left: 3px; right: 3px; bottom: 0; height: 2px; background: #76b9ed; }
.active { background: #3d4757; }
.active::after { left: 0; right: 0; }
.wd { font: 700 10px "Liberation Sans", sans-serif; fill: #fff; }
.tray { position: absolute; left: 1630px; right: 0; top: 0; height: 40px; display: flex; align-items: center; }
.t-ic { flex: none; }
.ppl { width: 18px; height: 20px; margin-left: 5px; }
.caret { width: 14px; height: 10px; margin-left: 19px; }
.wifi { width: 16px; height: 18px; margin-left: 10px; }
.spk { width: 16px; height: 18px; margin-left: 7px; }
.t-a { font: 400 17px "Liberation Sans", sans-serif; margin-left: 9px; width: 12px; }
.t-j { width: 14px; height: 16px; background: #fff; border: 2px solid #000; color: #000; font: 700 11px/12px "Liberation Sans", sans-serif; text-align: center; margin-left: 15px; }
.t-clock { width: 70px; margin-left: 12px; display: flex; flex-direction: column; align-items: center; gap: 7px; font: 11px "Liberation Sans", sans-serif; color: #ddd; }
.t-note { position: relative; margin-left: 13px; width: 18px; height: 20px; display: block; }
.t-note svg { width: 18px; height: 20px; display: block; }
.t-note em { position: absolute; right: -6px; bottom: -6px; width: 15px; height: 15px; border-radius: 50%; background: #222; border: 1px solid #ccc; font: 700 10px/13px "Liberation Sans", sans-serif; text-align: center; }

/* svg chart text */
.ax { font: 12px "Open Sans", sans-serif; fill: #8d8f94; }
.pk { font: 11px "DejaVu Sans", sans-serif; }
.pk-r { fill: #e06464; }
.pk-b { fill: #6cc4ea; }
.big { font: 400 22px "Noto Sans CJK JP", sans-serif; fill: #fff; letter-spacing: .4px; }
.ttl { font: 400 27px "Noto Sans CJK JP", sans-serif; fill: #fff; }
```
FILE: chart.js
```js
(function () {
  var NS = 'http://www.w3.org/2000/svg';
  var svg = document.getElementById('chart');
  function el(tag, attrs, text, parent) {
    var n = document.createElementNS(NS, tag);
    for (var k in attrs) n.setAttribute(k, attrs[k]);
    if (text) n.textContent = text;
    (parent || svg).appendChild(n);
    return n;
  }
  var GRID = '#434957';
  el('rect', { x: 20, y: 194, width: 66, height: 763, fill: '#182033' });

  // horizontal grid + axis labels
  var levels = [[260, '114.05'], [360, '114.00'], [460, '113.95'], [560, '113.90'], [660, '113.85'], [760, '113.80'], [860, '113.75']];
  levels.forEach(function (l) {
    el('path', { d: 'M85 ' + (l[0] + .5) + 'H1836', stroke: GRID, fill: 'none' });
    el('text', { x: 83, y: l[0] + 5, class: 'ax', 'text-anchor': 'end' }, l[1]);
    el('text', { x: 1838, y: l[0] + 5, class: 'ax' }, l[1]);
  });
  for (var y = 235; y < 940; y += 25) {
    if ((y - 260) % 100 === 0) continue;
    var minor = '#3f4656';
    el('path', { d: 'M79 ' + (y + .5) + 'H85', stroke: minor });
    el('path', { d: 'M1836 ' + (y + .5) + 'H1844', stroke: minor });
  }
  // vertical grid + time labels
  [[506, '20:30'], [1032, '21:00'], [1558, '21:30']].forEach(function (v) {
    el('path', { d: 'M' + (v[0] + .5) + ' 224V930', stroke: GRID });
    el('text', { x: v[0] - 1, y: 218, class: 'ax', 'text-anchor': 'middle' }, v[1]);
    el('text', { x: v[0] - 1, y: 943, class: 'ax', 'text-anchor': 'middle' }, v[1]);
  });

  function cx(i) { return 92.3 + 17.54 * i; }

  // candles: colour, body top, body bottom, wick top, wick bottom
  var C = [
    ['r', 560, 568, 556, 587], ['r', 552, 561, 552, 566], ['r', 548, 553, 537, 562], ['b', 548, 557, 546, 559],
    ['r', 546, 557, 542, 559], ['b', 546, 559, 542, 565], ['b', 558, 566, 558, 581], ['r', 552, 566, 548, 568],
    ['b', 552, 566, 542, 566], ['b', 566, 586, 562, 586], ['b', 588, 600, 580, 604], ['r', 597, 600, 590, 600],
    ['r', 594, 596, 593, 598], ['b', 594, 596, 588, 602], ['r', 586, 596, 586, 598], ['b', 588, 592, 584, 604],
    ['b', 592, 594, 582, 596], ['r', 590, 594, 584, 602], ['r', 554, 590, 554, 596], ['b', 554, 555, 537, 557],
    ['r', 552, 555, 550, 557], ['b', 552, 557, 550, 557], ['b', 557, 582, 554, 584], ['b', 584, 590, 578, 598],
    ['b', 589, 590, 578, 594], ['b', 590, 592, 582, 596], ['r', 590, 593, 582, 593], ['r', 579, 591, 558, 593],
    ['b', 579, 591, 579, 595], ['b', 589, 591, 585, 595], ['r', 583, 591, 572, 593], ['b', 583, 593, 583, 593],
    ['b', 591, 601, 590, 601], ['b', 599, 615, 598, 617], ['r', 593, 615, 593, 618], ['r', 581, 595, 576, 597],
    ['r', 577, 582, 571, 582], ['b', 577, 591, 564, 591], ['b', 589, 591, 585, 595], ['b', 589, 601, 587, 603],
    ['b', 599, 613, 599, 617], ['r', 599, 613, 594, 614], ['r', 570, 601, 566, 603], ['r', 568, 571, 564, 573],
    ['r', 566, 569, 557, 574], ['b', 565, 587, 565, 595], ['r', 579, 587, 579, 597], ['b', 579, 581, 572, 585],
    ['b', 579, 581, 575, 586], ['b', 579, 591, 579, 591], ['r', 585, 591, 570, 591], ['b', 585, 607, 585, 613],
    ['r', 591, 607, 591, 617], ['r', 575, 593, 575, 593], ['b', 575, 600, 575, 608], ['r', 585, 607, 578, 607],
    ['b', 585, 593, 582, 593], ['r', 589, 593, 585, 607], ['b', 589, 597, 588, 605], ['r', 593, 597, 589, 602],
    ['r', 592, 595, 589, 601], ['r', 575, 593, 572, 597], ['r', 572, 577, 564, 585], ['b', 572, 586, 568, 588],
    ['b', 586, 591, 568, 595], ['b', 589, 595, 578, 602], ['b', 593, 599, 593, 603], ['b', 597, 618, 597, 625],
    ['b', 617, 618, 616, 628], ['r', 601, 618, 600, 633], ['r', 599, 603, 596, 613], ['r', 593, 599, 588, 615],
    ['b', 593, 597, 589, 604], ['b', 596, 603, 589, 605], ['b', 601, 607, 595, 613], ['r', 597, 607, 593, 617],
    ['b', 596, 615, 596, 618], ['b', 613, 624, 604, 627], ['b', 624, 626, 622, 655], ['b', 625, 665, 618, 672],
    ['b', 663, 689, 658, 694], ['b', 687, 689, 685, 706], ['r', 639, 687, 632, 687], ['r', 641, 659, 632, 674],
    ['b', 643, 651, 640, 860], ['r', 583, 649, 574, 649], ['r', 523, 581, 523, 627], ['r', 304, 523, 293, 541],
    ['b', 302, 429, 298, 441], ['p', 370, 429, 360, 429]
  ];
  var FILL = { r: '#f47a7a', b: '#7dcff0', p: '#ff8083' };
  var EDGE = { r: '#8d4c55', b: '#4f8fb0', p: '#a85460' };
  var WICK = { r: '#b05a62', b: '#5fa6c6', p: '#a0545c' };
  C.forEach(function (c, i) {
    var x = Math.round(cx(i));
    el('path', { d: 'M' + (x + .5) + ' ' + c[3] + 'V' + c[4], stroke: WICK[c[0]], 'stroke-width': 1.2 });
    el('rect', { x: x - 7, y: c[1], width: 15, height: c[2] - c[1], fill: FILL[c[0]], stroke: EDGE[c[0]], 'stroke-width': 1 });
  });

  // moving averages
  var MA5 = '85,593 110,573 128,562 145,557 163,552 180,552 198,555 215,555 233,558 250,566 268,574 285,579 303,587 320,594 338,595 356,593 373,593 391,592 408,583 426,577 443,568 461,561 478,560 496,567 513,572 531,582 548,588 566,589 583,589 601,587 619,587 636,587 654,591 671,596 689,597 706,596 724,593 741,591 759,586 776,588 794,594 811,599 829,594 846,589 864,582 882,577 899,574 917,576 934,578 952,583 969,583 987,586 1004,589 1020,590 1039,592 1057,591 1074,588 1092,591 1109,593 1127,592 1145,592 1162,589 1180,585 1197,586 1215,583 1232,584 1250,587 1267,597 1285,604 1302,606 1320,607 1338,607 1355,602 1373,599 1390,599 1408,599 1425,605 1443,609 1460,614 1478,625 1495,643 1513,658 1530,661 1548,664 1565,661 1583,642 1600,610 1618,540 1635,499 1653,442';
  var MA21 = '85,576 110,577 128,579 163,578 215,579 233,577 268,578 320,580 356,579 391,576 408,573 443,572 461,571 496,575 531,579 548,580 583,584 654,583 759,583 811,591 846,591 882,588 934,588 987,589 1020,588 1039,587 1109,589 1145,588 1180,585 1232,586 1267,590 1320,594 1390,595 1425,596 1460,600 1500,608 1513,613 1565,621 1583,621 1600,618 1618,603 1635,595 1653,583';
  var MA75 = '85,566 128,563 180,559 233,558 393,558 540,556 689,561 794,569 917,575 1020,579 1145,584 1320,585 1408,586 1440,587 1513,594 1565,596 1600,595 1653,587';
  [[MA75, '#7fe8ea'], [MA21, '#e8892c'], [MA5, '#97c653']].forEach(function (m) {
    el('polyline', { points: m[0], fill: 'none', stroke: m[1], 'stroke-width': 1.2 });
  });

  // parabolic dots
  var RED = [[9, 541], [10, 543.5], [11, 546], [12, 548.3], [13, 550.7], [14, 552.7], [15, 554.7], [16, 556.7], [17, 558.3], [23, 539.3], [24, 540.3], [25, 541.7], [26, 542.7], [27, 544], [28, 545], [29, 546], [30, 547], [31, 548.3], [32, 550], [33, 554], [34, 559.3], [35, 564], [36, 568.3], [40, 565], [41, 566], [51, 559.3], [52, 561.3], [53, 563.3], [54, 565.7], [55, 567.7], [56, 569.7], [57, 571.7], [58, 573.3], [59, 575], [60, 576.7], [67, 567.3], [68, 569.7], [69, 573.3], [70, 577], [71, 580], [72, 583.3], [73, 586.3], [74, 589], [75, 591.7], [76, 594], [77, 596.3], [78, 600.7], [79, 607.7], [80, 618.3], [81, 630.7], [84, 636.3]];
  var BLUE = [[0, 625.3], [1, 619.3], [2, 611.7], [3, 604.3], [4, 598], [5, 592.3], [6, 587], [7, 582.3], [8, 578], [18, 603], [19, 600.3], [20, 598], [21, 595.7], [22, 593.3], [37, 617], [38, 615.7], [39, 614.7], [42, 615], [43, 613], [44, 609.7], [45, 606.3], [46, 603.7], [47, 600.7], [48, 598.3], [49, 596], [50, 593.7], [61, 615], [62, 613.3], [63, 611.3], [64, 609.3], [65, 607.7], [66, 606], [82, 704.3], [83, 703], [85, 854], [86, 840.7], [87, 807.7], [88, 777], [89, 748]];
  RED.forEach(function (d) { el('circle', { cx: cx(d[0]), cy: d[1], r: 3.5, fill: '#f47a7a' }); });
  BLUE.forEach(function (d) { el('circle', { cx: cx(d[0]), cy: d[1], r: 3.5, fill: '#7dcff0' }); });

  // peak/bottom markers
  [[2, 537, 'r'], [19, 535, 'r'], [44, 555, 'r'], [62, 563, 'r'], [87, 289, 'r'], [10, 607, 'b'], [34, 621, 'b'], [52, 619, 'b'], [84, 862, 'b']].forEach(function (m) {
    el('rect', { x: Math.round(cx(m[0])) - 3, y: m[1] - 3, width: 6, height: 6, fill: m[2] === 'r' ? '#f47a7a' : '#7dcff0' });
  });
  [[127, 514, '20:08', '113.910', 'r'], [266, 617, '20:16', '113.878', 'b'], [425, 512, '20:25', '113.911', 'r'], [687, 631, '20:40', '113.871', 'b'], [862, 532, '20:50', '113.901', 'r'], [1003, 630, '20:58', '113.872', 'b'], [1178, 540, '21:08', '113.897', 'r'], [1564, 873, '21:30', '113.750', 'b'], [1616, 266, '21:33', '114.034', 'r']].forEach(function (p) {
    var cls = 'pk pk-' + p[4];
    el('text', { x: p[0], y: p[1] + 4, class: cls }, p[2]);
    el('text', { x: p[0], y: p[1] + 18, class: cls }, p[3]);
  });

  // annotations
  [[410, 490, '113.911円'], [668, 674, '113.871円'], [1604, 253, '114.034円'], [1552, 920, '113.750円']].forEach(function (b) {
    el('text', { x: b[0], y: b[1], class: 'big' }, b[2]);
  });
  var title = el('text', { y: 244, class: 'ttl' });
  [[506, '1分足'], [612, '2018年'], [718, '10月'], [789, '05日'], [857, '金曜日'], [947, '21時'], [1017, '35分'], [1086, '米雇用統計直後']].forEach(function (t) {
    el('tspan', { x: t[0] }, t[1], title);
  });
})();
```
